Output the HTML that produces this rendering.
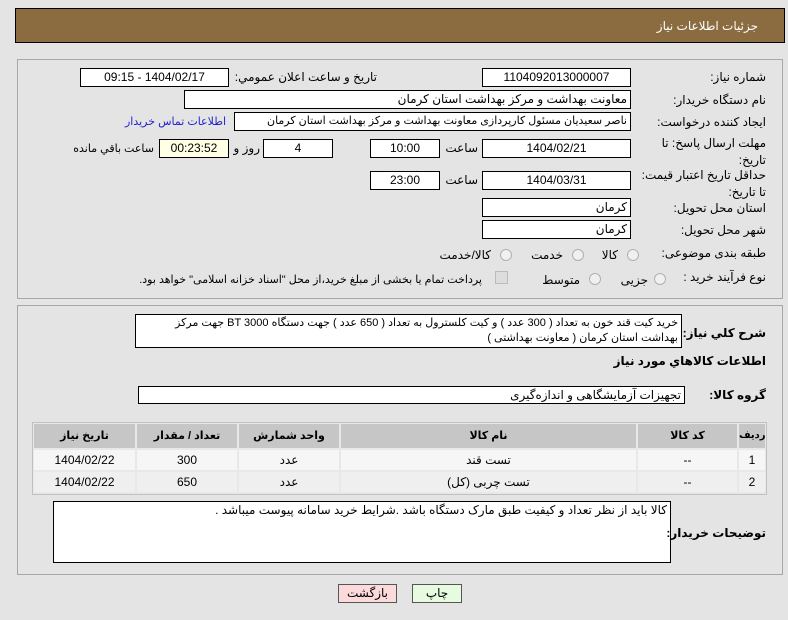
<!DOCTYPE html>
<html><head><meta charset="utf-8"><style>
body{margin:0;width:788px;height:620px;background:#e4e4e4;font-family:"Liberation Sans","DejaVu Sans",sans-serif;font-size:12px;color:#000;position:relative;overflow:hidden}
.a{position:absolute;white-space:nowrap}
.in{position:absolute;background:#fff;border:1px solid #000;box-sizing:border-box;height:19px;line-height:17px;direction:rtl;padding:0 3px;white-space:nowrap;overflow:hidden;font-size:12px}
.c{text-align:center}
.l{position:absolute;direction:rtl;text-align:right;white-space:nowrap;font-size:12px}
.s{font-size:11px}
.panel{position:absolute;border:1px solid #a8a8a8;box-sizing:border-box}
.cell{position:absolute;box-sizing:border-box;text-align:center;line-height:20px;font-size:12px}
.h{background:#c6c6c6;font-weight:bold;line-height:24px;font-size:11px}
.r{width:12px;height:12px;border:1px solid #b0b0b0;border-radius:50%;background:#f0f0f0;position:absolute;box-sizing:border-box}
</style></head><body>
<div class="a" style="left:15px;top:8px;width:770px;height:35px;background:#8b6b40;border:1px solid #000;box-sizing:border-box"></div>
<div class="l" style="right:30px;top:19px;color:#fff;font-size:12px">جزئیات اطلاعات نیاز</div>

<div class="panel" style="left:17px;top:59px;width:766px;height:240px"></div>
<div class="l" style="right:22px;top:70px">شماره نیاز:</div>
<div class="in c" style="left:482px;top:68px;width:149px">1104092013000007</div>
<div class="l" style="right:411px;top:70px">تاریخ و ساعت اعلان عمومي:</div>
<div class="in c" style="left:80px;top:68px;width:149px">1404/02/17 - 09:15</div>

<div class="l" style="right:22px;top:93px">نام دستگاه خریدار:</div>
<div class="in" style="left:184px;top:90px;width:447px">معاونت بهداشت و مرکز بهداشت استان کرمان</div>

<div class="l" style="right:22px;top:115px">ایجاد کننده درخواست:</div>
<div class="in s" style="left:234px;top:112px;width:397px">ناصر سعیدیان  مسئول کارپردازی معاونت بهداشت و مرکز بهداشت استان کرمان</div>
<div class="l s" style="right:562px;top:115px;color:#2222cc">اطلاعات تماس خریدار</div>

<div class="l" style="right:22px;top:135px;line-height:17px">مهلت ارسال پاسخ: تا<br>تاریخ:</div>
<div class="in c" style="left:482px;top:139px;width:149px">1404/02/21</div>
<div class="l" style="right:310px;top:141px">ساعت</div>
<div class="in c" style="left:370px;top:139px;width:70px">10:00</div>
<div class="in c" style="left:263px;top:139px;width:70px">4</div>
<div class="l" style="right:528px;top:141px">روز و</div>
<div class="in c" style="left:159px;top:139px;width:70px;background:#ffffe6">00:23:52</div>
<div class="l s" style="right:634px;top:142px">ساعت باقي مانده</div>

<div class="l" style="right:22px;top:167px;line-height:17px">حداقل تاریخ اعتبار قیمت:<br>تا تاریخ:</div>
<div class="in c" style="left:482px;top:171px;width:149px">1404/03/31</div>
<div class="l" style="right:310px;top:173px">ساعت</div>
<div class="in c" style="left:370px;top:171px;width:70px">23:00</div>

<div class="l" style="right:22px;top:201px">استان محل تحویل:</div>
<div class="in" style="left:482px;top:198px;width:149px">کرمان</div>
<div class="l" style="right:22px;top:223px">شهر محل تحویل:</div>
<div class="in" style="left:482px;top:220px;width:149px">کرمان</div>

<div class="l" style="right:22px;top:246px">طبقه بندی موضوعی:</div>
<div class="r" style="left:627px;top:249px"></div><div class="l" style="right:170px;top:248px">کالا</div>
<div class="r" style="left:572px;top:249px"></div><div class="l" style="right:225px;top:248px">خدمت</div>
<div class="r" style="left:500px;top:249px"></div><div class="l" style="right:297px;top:248px">کالا/خدمت</div>

<div class="l" style="right:22px;top:270px">نوع فرآیند خرید :</div>
<div class="r" style="left:654px;top:273px"></div><div class="l" style="right:140px;top:273px">جزیی</div>
<div class="r" style="left:589px;top:273px"></div><div class="l" style="right:208px;top:273px">متوسط</div>
<div class="a" style="left:495px;top:271px;width:11px;height:11px;background:#ddd;border:1px solid #bbb"></div>
<div class="l s" style="right:306px;top:273px">پرداخت تمام یا بخشی از مبلغ خرید،از محل "اسناد خزانه اسلامی" خواهد بود.</div>

<div class="panel" style="left:17px;top:305px;width:766px;height:270px"></div>
<div class="l" style="right:22px;top:326px;font-weight:bold">شرح کلي نیاز:</div>
<div class="in s" style="left:135px;top:314px;width:547px;height:34px;line-height:15px;white-space:normal;padding-top:1px">خرید کیت قند خون به تعداد ( 300 عدد ) و کیت کلسترول به تعداد ( 650 عدد ) جهت دستگاه BT 3000 جهت مرکز بهداشت استان کرمان ( معاونت بهداشتی )</div>
<div class="l" style="right:22px;top:354px;font-weight:bold">اطلاعات کالاهاي مورد نیاز</div>
<div class="l" style="right:22px;top:388px;font-weight:bold">گروه کالا:</div>
<div class="in" style="left:138px;top:386px;width:547px;height:18px">تجهیزات آزمایشگاهی و اندازه‌گیری</div>

<div class="a" style="left:32px;top:422px;width:735px;height:73px;border:1px solid #c0c0c0;box-sizing:border-box;background:#e8e8e8"></div>
<div class="cell h" style="left:34px;top:424px;width:101px;height:24px">تاریخ نیاز</div>
<div class="cell h" style="left:137px;top:424px;width:100px;height:24px">تعداد / مقدار</div>
<div class="cell h" style="left:239px;top:424px;width:100px;height:24px">واحد شمارش</div>
<div class="cell h" style="left:341px;top:424px;width:295px;height:24px">نام کالا</div>
<div class="cell h" style="left:638px;top:424px;width:99px;height:24px">کد کالا</div>
<div class="cell h" style="left:739px;top:424px;width:26px;height:24px;font-size:10px">ردیف</div>
<div class="cell" style="left:34px;top:450px;width:101px;height:20px;background:#f6f6f6">1404/02/22</div>
<div class="cell" style="left:137px;top:450px;width:100px;height:20px;background:#f6f6f6">300</div>
<div class="cell" style="left:239px;top:450px;width:100px;height:20px;background:#f6f6f6">عدد</div>
<div class="cell" style="left:341px;top:450px;width:295px;height:20px;background:#f6f6f6">تست قند</div>
<div class="cell" style="left:638px;top:450px;width:99px;height:20px;background:#f6f6f6">--</div>
<div class="cell" style="left:739px;top:450px;width:26px;height:20px;background:#f6f6f6">1</div>
<div class="cell" style="left:34px;top:472px;width:101px;height:20px;background:#efefef">1404/02/22</div>
<div class="cell" style="left:137px;top:472px;width:100px;height:20px;background:#efefef">650</div>
<div class="cell" style="left:239px;top:472px;width:100px;height:20px;background:#efefef">عدد</div>
<div class="cell" style="left:341px;top:472px;width:295px;height:20px;background:#efefef">تست چربی (کل)</div>
<div class="cell" style="left:638px;top:472px;width:99px;height:20px;background:#efefef">--</div>
<div class="cell" style="left:739px;top:472px;width:26px;height:20px;background:#efefef">2</div>

<div class="in" style="left:53px;top:501px;width:618px;height:62px">کالا باید از نظر تعداد و کیفیت طبق مارک دستگاه باشد .شرایط خرید سامانه پیوست میباشد .</div>
<div class="l" style="right:22px;top:526px;font-weight:bold">توضیحات خریدار:</div>

<div class="a c" style="left:338px;top:584px;width:59px;height:19px;background:#fadada;border:1px solid #555;box-sizing:border-box;line-height:17px;text-align:center">بازگشت</div>
<div class="a c" style="left:412px;top:584px;width:50px;height:19px;background:#e6fbe0;border:1px solid #555;box-sizing:border-box;line-height:17px;text-align:center">چاپ</div>
</body></html>
